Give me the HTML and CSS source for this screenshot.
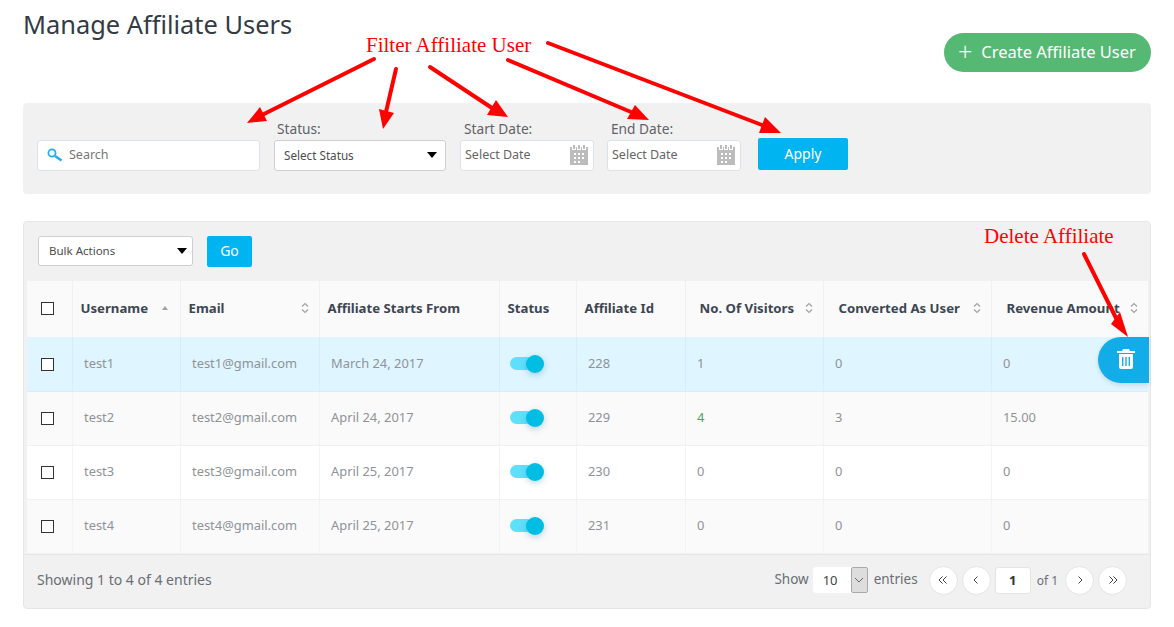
FILE: index.html
```html
<!DOCTYPE html>
<html lang="en">
<head>
    <meta charset="UTF-8">
    <meta name="viewport" content="width=device-width, initial-scale=1.0">
    <title>Manage Affiliate Users</title>
    <link rel="stylesheet" href="styles.css">
</head>
<body>

    <svg width="0" height="0" class="defs">
        <symbol id="calendar" viewBox="0 0 18 20">
            <path fill="#bcbcbc" d="M3 0h2v4H3zM8 0h2v4H8zM13 0h2v4h-2zM0 2h2v3h4V2h1v3h4V2h1v3h4V2h2v18H0zM4 8v2h2V8zm4 0v2h2V8zm4 0v2h2V8zM4 12v2h2v-2zm4 0v2h2v-2zm4 0v2h2v-2zM4 16v2h2v-2zm4 0v2h2v-2z"/>
        </symbol>
        <symbol id="sort" viewBox="0 0 8 12">
            <path fill="none" stroke="#a2a2a2" stroke-width="1.2" d="M1 4.5l3-3 3 3M1 7.5l3 3 3-3"/>
        </symbol>
    </svg>

    <header class="page-head">
        <h1>Manage Affiliate Users</h1>
        <a class="btn-create"><span class="plus">+</span>Create Affiliate User</a>
    </header>

    <section class="filters">
        <div class="search-box">
            <svg width="16" height="14" viewBox="0 0 16 14"><circle cx="5" cy="5" r="3.6" fill="none" stroke="#1fb0ec" stroke-width="1.7"/><path d="M8 8l6.5 4.5" stroke="#1fb0ec" stroke-width="2.6"/></svg>
            <span>Search</span>
        </div>
        <div class="field">
            <label class="status-label">Status:</label>
            <div class="select status-select">Select Status<i class="caret"></i></div>
        </div>
        <div class="field">
            <label>Start Date:</label>
            <div class="date-box">Select Date<svg width="18" height="20"><use href="#calendar"/></svg></div>
        </div>
        <div class="field field-end">
            <label>End Date:</label>
            <div class="date-box">Select Date<svg width="18" height="20"><use href="#calendar"/></svg></div>
        </div>
        <button class="btn-apply">Apply</button>
    </section>

    <section class="panel">
        <div class="toolbar">
            <div class="select bulk-select">Bulk Actions<i class="caret"></i></div>
            <button class="btn-go">Go</button>
        </div>

        <table>
            <colgroup>
                <col class="c-check"><col class="c-user"><col class="c-email"><col class="c-start"><col class="c-status">
                <col class="c-id"><col class="c-visitors"><col class="c-converted"><col class="c-revenue">
            </colgroup>
            <thead>
                <tr>
                    <th class="check"><input type="checkbox"></th>
                    <th class="sorted"><div class="th-in">Username<i class="up"></i></div></th>
                    <th class="sorted"><div class="th-in">Email<svg width="8" height="12"><use href="#sort"/></svg></div></th>
                    <th><div class="th-in">Affiliate Starts From</div></th>
                    <th><div class="th-in">Status</div></th>
                    <th><div class="th-in">Affiliate Id</div></th>
                    <th class="wide visitors"><div class="th-in">No. Of Visitors<svg width="8" height="12"><use href="#sort"/></svg></div></th>
                    <th class="wide"><div class="th-in">Converted As User<svg width="8" height="12"><use href="#sort"/></svg></div></th>
                    <th class="wide"><div class="th-in">Revenue Amount<svg width="8" height="12"><use href="#sort"/></svg></div></th>
                </tr>
            </thead>
            <tbody>
                <tr class="active">
                    <td class="check"><input type="checkbox"></td>
                    <td>test1</td><td>test1@gmail.com</td><td>March 24, 2017</td>
                    <td class="switch"><span class="toggle"></span></td>
                    <td>228</td><td>1</td><td>0</td><td>0</td>
                </tr>
                <tr class="alt">
                    <td class="check"><input type="checkbox"></td>
                    <td>test2</td><td>test2@gmail.com</td><td>April 24, 2017</td>
                    <td class="switch"><span class="toggle"></span></td>
                    <td>229</td><td class="green">4</td><td>3</td><td>15.00</td>
                </tr>
                <tr>
                    <td class="check"><input type="checkbox"></td>
                    <td>test3</td><td>test3@gmail.com</td><td>April 25, 2017</td>
                    <td class="switch"><span class="toggle"></span></td>
                    <td>230</td><td>0</td><td>0</td><td>0</td>
                </tr>
                <tr class="alt">
                    <td class="check"><input type="checkbox"></td>
                    <td>test4</td><td>test4@gmail.com</td><td>April 25, 2017</td>
                    <td class="switch"><span class="toggle"></span></td>
                    <td>231</td><td>0</td><td>0</td><td>0</td>
                </tr>
            </tbody>
        </table>

        <div class="table-foot">
            <span>Showing 1 to 4 of 4 entries</span>
            <div class="paging">
                <span class="show">Show</span>
                <div class="per-page"><span>10</span><i class="per-arrow"><svg width="10" height="6" viewBox="0 0 10 6"><path d="M1 1l4 4 4-4" fill="none" stroke="#666"/></svg></i></div>
                <span class="entries">entries</span>
                <a class="page-btn"><svg width="10" height="8" viewBox="0 0 10 8"><path d="M4.5 0.5L1 4l3.5 3.5M8.5 0.5L5 4l3.5 3.5" fill="none" stroke="#444"/></svg></a>
                <a class="page-btn"><svg width="6" height="8" viewBox="0 0 6 8"><path d="M4.5 0.5L1 4l3.5 3.5" fill="none" stroke="#444"/></svg></a>
                <span class="page-num">1</span>
                <span class="of">of 1</span>
                <a class="page-btn"><svg width="6" height="8" viewBox="0 0 6 8"><path d="M1.5 0.5L5 4 1.5 7.5" fill="none" stroke="#444"/></svg></a>
                <a class="page-btn"><svg width="10" height="8" viewBox="0 0 10 8"><path d="M1.5 0.5L5 4 1.5 7.5M5.5 0.5L9 4 5.5 7.5" fill="none" stroke="#444"/></svg></a>
            </div>
        </div>

        <a class="btn-delete">
            <svg width="18" height="20" viewBox="0 0 18 20"><path fill="#fff" d="M6 0h6l1 2h5v2H0V2h5zM2 5h14v13a2 2 0 0 1-2 2H4a2 2 0 0 1-2-2zM5 8v9h1.4V8zm3.3 0v9h1.4V8zm3.3 0v9H13V8z"/></svg>
        </a>
    </section>

    <!-- annotations drawn on top of the screenshot -->
    <span class="note note-filter">Filter Affiliate User</span>
    <span class="note note-delete">Delete Affiliate</span>
    <svg class="arrows" width="1174" height="627" viewBox="0 0 1174 627">
        <g stroke="#f00" stroke-width="4" stroke-linecap="round" fill="none">
            <path d="M374 59L262 115"/>
            <path d="M396 69L386 112"/>
            <path d="M430 67L492 108"/>
            <path d="M508 60L631 112"/>
            <path d="M548 43L762 125"/>
            <path d="M1084 254L1116 318"/>
        </g>
        <g fill="#f00">
            <path d="M247 123L260 107 267 121z"/>
            <path d="M383 129L379 109 394 113z"/>
            <path d="M508 117L496 100 487 115z"/>
            <path d="M649 120L635 105 627 119z"/>
            <path d="M781 133L765 117 759 133z"/>
            <path d="M1128 337L1120 312 1111 324z"/>
        </g>
    </svg>

</body>
</html>
```

FILE: styles.css
```css
* {
    box-sizing: border-box;
}

body {
    margin: 0;
    padding: 0 23px;
    font-family: "Noto Sans", sans-serif;
    font-size: 13px;
    color: #5f6368;
    background-color: #fff;
    position: relative;
}

.defs {
    position: absolute;
}

.page-head {
    display: flex;
    justify-content: space-between;
    align-items: flex-start;
    height: 103px;
}

h1 {
    margin: 7px 0 0;
    font-size: 25.4px;
    line-height: 34px;
    font-weight: 400;
    color: #333b45;
}

.btn-create {
    display: flex;
    align-items: center;
    margin-top: 33px;
    width: 207px;
    height: 39px;
    padding: 0 0 2px 14px;
    border-radius: 20px;
    background-color: #55b973;
    color: #fff;
    font-size: 16.5px;
}

.plus {
    font-size: 25px;
    font-weight: 300;
    line-height: 1;
    margin-right: 9px;
}

.filters {
    display: flex;
    align-items: flex-end;
    gap: 14px;
    height: 91px;
    padding: 0 14px 23px;
    border-radius: 4px;
    background-color: #f1f1f2;
}

.field label {
    display: block;
    padding-left: 4px;
    margin-bottom: 2px;
    line-height: 18px;
    font-size: 13.7px;
}

.field-end {
    margin-left: -1px;
}

.field .status-label {
    padding-left: 3px;
}

.search-box, .date-box {
    display: flex;
    align-items: center;
    height: 31px;
    padding-bottom: 2px;
    background-color: #fff;
    border: 1px solid #dbe2ec;
    border-radius: 3px;
    font-size: 12.5px;
}

.search-box {
    width: 223px;
    padding-left: 9px;
    gap: 6px;
    color: #777;
}

.date-box {
    justify-content: space-between;
    padding: 0 5px 2px 4px;
    width: 134px;
    color: #666;
}

.select {
    display: flex;
    align-items: center;
    justify-content: space-between;
    background-color: #fff;
    border: 1px solid #cfcfcf;
    border-radius: 3px;
    color: #4d4d4d;
}

.status-select {
    width: 172px;
    height: 31px;
    padding: 0 8px 1px 9px;
    font-size: 11.7px;
}

.bulk-select {
    width: 155px;
    height: 30px;
    padding: 0 5px 1px 10px;
    font-size: 11.5px;
}

.caret {
    width: 0;
    height: 0;
    border-left: 5px solid transparent;
    border-right: 5px solid transparent;
    border-top: 6px solid #000;
}

.btn-apply, .btn-go {
    border: none;
    border-radius: 2px;
    background-color: #00b4f1;
    color: #fff;
    font-family: inherit;
}

.btn-apply {
    width: 90px;
    height: 32px;
    margin: 0 0 1px 3px;
    padding-bottom: 3px;
    font-size: 14px;
}

.panel {
    position: relative;
    margin-top: 27px;
    height: 388px;
    border: 1px solid #e6e6e6;
    border-radius: 4px;
    background-color: #f1f1f2;
}

.toolbar {
    display: flex;
    align-items: flex-start;
    gap: 14px;
    height: 59px;
    padding: 14px 0 0 14px;
}

.btn-go {
    width: 45px;
    height: 31px;
    padding-bottom: 3px;
    font-size: 14px;
}

table {
    table-layout: fixed;
    width: 1121px;
    margin-left: 3px;
    border-collapse: collapse;
}

.c-check { width: 45px; }
.c-user { width: 108px; }
.c-email { width: 139px; }
.c-start { width: 180px; }
.c-status { width: 77px; }
.c-id { width: 109px; }
.c-visitors { width: 138px; }
.c-converted { width: 168px; }
.c-revenue { width: 157px; }

th {
    height: 56px;
    padding: 0 8px 2px;
    background-color: #fafafa;
    border-right: 1px solid #f0f0f0;
    text-align: left;
    color: #3d4653;
    font-size: 13.2px;
    font-weight: 700;
}

th.wide {
    padding: 0 10px 2px 15px;
}

th.visitors {
    padding-left: 14px;
}

th.sorted {
    padding-right: 10px;
}

.th-in {
    display: flex;
    align-items: center;
    justify-content: space-between;
    white-space: nowrap;
}

.up {
    width: 0;
    height: 0;
    margin-right: 2px;
    border-left: 3.5px solid transparent;
    border-right: 3.5px solid transparent;
    border-bottom: 4px solid #a2a2a2;
}

td {
    height: 54px;
    padding: 0 12px 2px 11.5px;
    background-color: #fff;
    border-right: 1px solid #f3f3f3;
    border-bottom: 1px solid #f1f1f1;
    color: #8f9398;
    font-size: 12.9px;
}

th:last-child, td:last-child {
    border-right: none;
}

.alt td {
    background-color: #fafafa;
}

.active td {
    background-color: #dff5ff;
    border-color: #d5eefa;
}

th.check {
    padding: 0 0 2px 14px;
}

td.check {
    padding: 1px 0 0 14px;
}

td.switch {
    padding: 0 12px 1px 12px;
}

input[type="checkbox"] {
    appearance: none;
    display: block;
    width: 13px;
    height: 13px;
    margin: 0;
    background-color: #fff;
    border: 1px solid #333;
}

.toggle {
    display: block;
    position: relative;
    width: 23px;
    height: 13px;
    margin-left: -2px;
    border-radius: 7px;
    background-color: #5fe0fa;
}

.toggle::after {
    content: "";
    position: absolute;
    left: 16px;
    top: -2px;
    width: 18px;
    height: 18px;
    border-radius: 50%;
    background-color: #00bde3;
    box-shadow: 0 2px 6px rgba(0, 120, 160, 0.3);
}

.green {
    color: #4aa564;
}

.table-foot {
    display: flex;
    align-items: center;
    justify-content: space-between;
    height: 55px;
    padding: 0 23px 3px 13px;
    border-top: 1px solid #e6e6e6;
    font-size: 14px;
    color: #6a6e73;
}

.table-foot > span {
    margin-top: -2px;
}

.paging {
    display: flex;
    align-items: center;
    gap: 4px;
    font-size: 13.5px;
}

.show, .entries {
    margin-top: -2px;
}

.per-page {
    display: flex;
    justify-content: space-between;
    width: 55px;
    height: 26px;
    padding-left: 10px;
    border-radius: 3px;
    background-color: #fff;
    font-size: 13px;
    line-height: 26px;
    color: #444;
}

.per-arrow {
    display: flex;
    align-items: center;
    justify-content: center;
    width: 17px;
    border: 1px solid #aaa;
    border-radius: 2px;
    background-color: #ddd;
}

.entries {
    margin-right: 7px;
    margin-left: 2px;
}

.page-btn {
    display: flex;
    align-items: center;
    justify-content: center;
    width: 29px;
    height: 29px;
    border: 1px solid #e4e4e4;
    border-radius: 50%;
    background-color: #fff;
}

.page-num {
    width: 36px;
    height: 27px;
    border: 1px solid #e4e4e4;
    border-radius: 3px;
    background-color: #fff;
    text-align: center;
    line-height: 25px;
    font-size: 13px;
    font-weight: 700;
    color: #333;
}

.of {
    margin: 0 3px 0 2px;
    font-size: 12px;
    white-space: nowrap;
}

.btn-delete {
    position: absolute;
    top: 115px;
    right: 1px;
    display: flex;
    align-items: center;
    justify-content: center;
    width: 51px;
    height: 46px;
    padding: 0 0 3px 5px;
    border-radius: 23px 0 0 23px;
    background-color: #12ade8;
    box-shadow: 0 2px 5px rgba(0, 0, 0, 0.12);
}

.note {
    position: absolute;
    font-family: "Liberation Serif", serif;
    font-size: 21px;
    line-height: 24px;
    color: #f00;
    white-space: nowrap;
}

.note-filter {
    left: 366px;
    top: 33px;
}

.note-delete {
    left: 984px;
    top: 224px;
}

.arrows {
    position: absolute;
    left: 0;
    top: 0;
    pointer-events: none;
}
```
